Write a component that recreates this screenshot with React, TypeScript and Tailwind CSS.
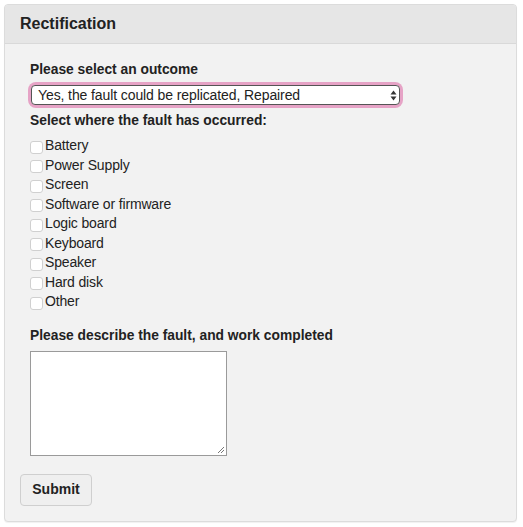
const areas = [
  "Battery",
  "Power Supply",
  "Screen",
  "Software or firmware",
  "Logic board",
  "Keyboard",
  "Speaker",
  "Hard disk",
  "Other",
];

export default function App() {
  return (
    <div className="min-h-[527px] w-[523px] bg-white pl-1 pt-1 font-['Liberation_Sans',Arial,sans-serif] text-[#222]">
      <div className="w-[513px] overflow-hidden rounded-[4px] border border-[#dcdcdc] bg-[#f2f2f2] shadow-[0_1px_1px_rgba(0,0,0,0.06)]">
        <div className="flex h-[39px] items-center border-b border-[#d9d9d9] bg-[#e6e6e6] px-[15px]">
          <h2 className="text-[16px] font-bold leading-none">Rectification</h2>
        </div>

        <form className="px-[15px] pb-[15px] pt-[18px]" onSubmit={(e) => e.preventDefault()}>
          <div className="px-[10px]">
            <label className="block text-[13.8px] font-bold leading-4">Please select an outcome</label>
            <div className="ml-[1px] mt-[7px] w-[369px] rounded-[5px] ring-[3px] ring-[#e6a3c6]">
              <div className="relative flex h-[20px] items-center rounded-[4px] border border-[#555] bg-white pl-[6px] text-[14px] leading-none">
                <span className="tracking-[-0.1px]">Yes, the fault could be replicated, Repaired</span>
                <svg className="absolute right-[2px] top-[4px]" width="7" height="11" viewBox="0 0 7 11">
                  <path d="M3.5 0.5 L6.5 4.5 H0.5 Z" fill="#333" />
                  <path d="M3.5 10.5 L6.5 6.5 H0.5 Z" fill="#333" />
                </svg>
              </div>
            </div>

            <label className="mt-[8px] block text-[13.8px] font-bold leading-4">
              Select where the fault has occurred:
            </label>
            <ul className="mt-[7px]">
              {areas.map((a) => (
                <li key={a} className="flex h-[19.5px] items-center text-[14px] tracking-[-0.15px]">
                  <span className="mr-[2px] mt-[3px] inline-block size-[13px] rounded-[3px] border border-[#d0d0d0] bg-white" />
                  {a}
                </li>
              ))}
            </ul>

            <label className="mt-[16px] block text-[13.8px] font-bold leading-4">
              Please describe the fault, and work completed
            </label>
            <div className="relative mt-[7px] h-[105px] w-[197px] border border-[#9a9a9a] bg-white">
              <svg className="absolute bottom-[2px] right-[2px]" width="7" height="7" viewBox="0 0 7 7">
                <path d="M1 7 L7 1 M4 7 L7 4" stroke="#777" strokeWidth="1" />
              </svg>
            </div>
          </div>

          <button
            type="submit"
            className="mt-[18px] h-[32px] w-[72px] rounded-[4px] border border-[#cfcfcf] bg-[#efefef] text-[14px] font-bold text-[#222]"
          >
            Submit
          </button>
        </form>
      </div>
    </div>
  );
}
